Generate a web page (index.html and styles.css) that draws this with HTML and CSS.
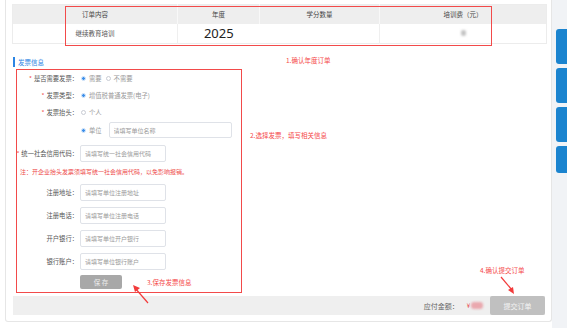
FILE: index.html
```html
<!DOCTYPE html>
<html lang="zh-CN">
<head>
  <meta charset="UTF-8" />
  <title>确认订单</title>
  <link rel="stylesheet" href="styles.css">
</head>
<body>
<div class="page">

  <div class="card">
    <table class="order-table">
      <thead>
        <tr>
          <th class="c1">订单内容</th>
          <th class="c2">年度</th>
          <th class="c3">学分数量</th>
          <th class="c4">培训费（元）</th>
        </tr>
      </thead>
      <tbody>
        <tr>
          <td>继续教育培训</td>
          <td class="year">2025</td>
          <td class="hidden-val"></td>
          <td><span class="smudge"></span></td>
        </tr>
      </tbody>
    </table>

    <h2 class="section-title">发票信息</h2>

    <div class="invoice-form">
      <div class="row choice">
        <span class="label"><i>*</i>是否需要发票：</span>
        <div class="ctrl">
          <span class="radio on"></span><span class="opt">需要</span>
          <span class="radio"></span><span class="opt">不需要</span>
        </div>
      </div>
      <div class="row choice">
        <span class="label"><i>*</i>发票类型：</span>
        <div class="ctrl">
          <span class="radio on"></span><span class="opt">增值税普通发票(电子)</span>
        </div>
      </div>
      <div class="row choice">
        <span class="label"><i>*</i>发票抬头：</span>
        <div class="ctrl">
          <span class="radio"></span><span class="opt">个人</span>
        </div>
      </div>
      <div class="row unit">
        <span class="label"></span>
        <div class="ctrl">
          <span class="radio on"></span><span class="opt">单位</span>
          <input class="input wide" placeholder="请填写单位名称">
        </div>
      </div>
      <div class="row field">
        <span class="label"><i>*</i>统一社会信用代码：</span>
        <div class="ctrl"><input class="input" placeholder="请填写统一社会信用代码"></div>
      </div>

      <p class="note">注：开企业抬头发票须填写统一社会信用代码，以免影响报销。</p>

      <div class="row field first">
        <span class="label">注册地址：</span>
        <div class="ctrl"><input class="input" placeholder="请填写单位注册地址"></div>
      </div>
      <div class="row field">
        <span class="label">注册电话：</span>
        <div class="ctrl"><input class="input" placeholder="请填写单位注册电话"></div>
      </div>
      <div class="row field">
        <span class="label">开户银行：</span>
        <div class="ctrl"><input class="input" placeholder="请填写单位开户银行"></div>
      </div>
      <div class="row field">
        <span class="label">银行账户：</span>
        <div class="ctrl"><input class="input" placeholder="请填写单位银行账户"></div>
      </div>

      <button class="save-btn">保 存</button>
    </div>

    <div class="pay-bar">
      <span class="pay-label">应付金额：</span>
      <span class="pay-amount">¥<span class="blur-num"></span></span>
      <button class="submit-btn">提交订单</button>
    </div>
  </div>

  <div class="side">
    <span class="tab"></span>
    <span class="tab"></span>
    <span class="tab"></span>
    <span class="tab short"></span>
  </div>

  <!-- annotation marks drawn over the screenshot -->
  <div class="mark box-order"></div>
  <div class="mark box-form"></div>
  <span class="mark tip tip1">1.确认年度订单</span>
  <span class="mark tip tip2">2.选择发票，填写相关信息</span>
  <span class="mark tip tip3">3.保存发票信息</span>
  <span class="mark tip tip4">4.确认提交订单</span>

  <svg class="mark arrow3" width="20" height="22" viewBox="0 0 20 22">
    <line x1="17" y1="20" x2="4" y2="5" stroke="#f23b3b" stroke-width="1.2"/>
    <polygon points="2,2 9,5 4,9" fill="#f23b3b"/>
  </svg>
  <svg class="mark arrow4" width="18" height="20" viewBox="0 0 18 20">
    <line x1="2" y1="1" x2="13" y2="14" stroke="#f23b3b" stroke-width="1.2"/>
    <polygon points="15,18 9,14 14,11" fill="#f23b3b"/>
  </svg>
</div>
</body>
</html>
```

FILE: styles.css
```css
* { margin: 0; padding: 0; box-sizing: border-box; }

body {
  width: 567px;
  height: 328px;
  overflow: hidden;
  background: #fff;
  font-family: "Noto Sans CJK SC", "Noto Sans", sans-serif;
  color: #606266;
}

.page {
  position: relative;
  display: flex;
  height: 328px;
}

.card {
  margin-left: 5px;
  width: 547px;
  height: 322px;
  border: 1px solid #e6e6e6;
  border-top: none;
  border-radius: 0 0 3px 3px;
  padding: 4px 5px 0 6px;
}

/* order table */
.order-table {
  width: 534px;
  border-collapse: collapse;
  table-layout: fixed;
  border: 1px solid #ececec;
  font-size: 6.5px;
}

.order-table th {
  height: 19px;
  background: #eeeeee;
  color: #444;
  font-weight: normal;
  border-right: 1px solid #f8f8f8;
}

.order-table th:last-child { border-right: none; }

.c1 { width: 165px; }
.c2 { width: 82px; }
.c3 { width: 120px; }
.c4 { width: 167px; }

.order-table td {
  height: 20px;
  text-align: center;
  color: #555;
  border-right: 1px solid #efefef;
}

.order-table td.year {
  font-family: "Noto Sans", sans-serif;
  font-size: 13px;
  color: #222;
  border-right: none;
}

.order-table td:last-child { border-right: none; }

.smudge {
  display: inline-block;
  width: 5px;
  height: 6px;
  background: #c4c4c4;
  border-radius: 2px;
  filter: blur(1px);
}

.section-title {
  margin: 13px 0 3px 1px;
  height: 10px;
  line-height: 10px;
  padding-left: 3px;
  border-left: 2px solid #2b85e4;
  font-size: 6.5px;
  font-weight: normal;
  color: #2b85e4;
}

/* invoice form */
.invoice-form { font-size: 6.3px; }

.row {
  display: grid;
  grid-template-columns: 66px 1fr;
  column-gap: 2px;
  align-items: center;
}

.row.choice { height: 17px; }
.row.unit { height: 18px; }
.row.field { height: 17px; margin-top: 6px; }
.row.field.first { margin-top: 5px; }

.label {
  text-align: right;
  color: #555;
  white-space: nowrap;
}

.label i {
  font-style: normal;
  color: #f05050;
  margin-right: 2px;
}

.ctrl {
  display: flex;
  align-items: center;
}

.radio {
  width: 5px;
  height: 5px;
  margin-left: 1px;
  border: 1px solid #c8ccd4;
  border-radius: 50%;
}

.radio.on {
  border-color: #c3dcf7;
  background: radial-gradient(circle, #3d8fea 0 1.3px, #fff 1.6px);
}

.opt {
  margin: 0 3px 0 3px;
  color: #999;
}

.input {
  width: 86px;
  height: 17px;
  padding-left: 4px;
  border: 1px solid #dfe2e8;
  border-radius: 2px;
  font-family: inherit;
  font-size: 6px;
  color: #333;
  outline: none;
}

.input::placeholder { color: #9a9a9a; }

.input.wide {
  width: 123px;
  height: 16px;
  margin-left: 4px;
}

.note {
  height: 14px;
  line-height: 14px;
  margin-top: 3px;
  padding-left: 8px;
  font-size: 6px;
  color: #ee4b4b;
}

.save-btn {
  display: block;
  margin: 5px 0 0 68px;
  width: 42px;
  height: 14px;
  border: none;
  border-radius: 2px;
  background: #a8a8a8;
  color: #eee;
  font-family: inherit;
  font-size: 6.5px;
}

/* bottom bar */
.pay-bar {
  margin: 7px 1px 0 1px;
  height: 19px;
  background: #efefef;
  display: flex;
  align-items: center;
  justify-content: flex-end;
}

.pay-label {
  font-size: 7px;
  color: #666;
}

.pay-amount {
  display: flex;
  align-items: center;
  margin: 0 7px 0 8px;
  font-size: 6px;
  color: #e83c3c;
}

.blur-num {
  width: 12px;
  height: 7px;
  margin-left: 1px;
  background: rgba(230, 110, 120, 0.55);
  border-radius: 3px;
  filter: blur(1.2px);
}

.submit-btn {
  width: 55px;
  height: 19px;
  border: none;
  border-radius: 2px;
  background: #c0c0c0;
  color: #f4f4f4;
  font-family: inherit;
  font-size: 7px;
}

/* right strip */
.side {
  flex: 1;
  background: #f1f3f6;
  padding: 29px 0 0 4px;
  display: flex;
  flex-direction: column;
  gap: 4px;
}

.tab {
  height: 35px;
  background: #1b84cf;
  border-radius: 3px 0 0 3px;
}

.tab.short { height: 27px; }

/* annotations */
.mark { position: absolute; }

.box-order {
  left: 65px; top: 6px;
  width: 427px; height: 40px;
  border: 1.5px solid #f24a4a;
}

.box-form {
  left: 16px; top: 69px;
  width: 226px; height: 224px;
  border: 1.5px solid #f24a4a;
}

.tip {
  font-size: 6.5px;
  line-height: 8px;
  color: #f54848;
  white-space: nowrap;
}

.tip1 { left: 286px; top: 56px; }
.tip2 { left: 250px; top: 131px; }
.tip3 { left: 147px; top: 278px; }
.tip4 { left: 480px; top: 266px; }

.arrow3 { left: 131px; top: 283px; }
.arrow4 { left: 499px; top: 276px; }
```
